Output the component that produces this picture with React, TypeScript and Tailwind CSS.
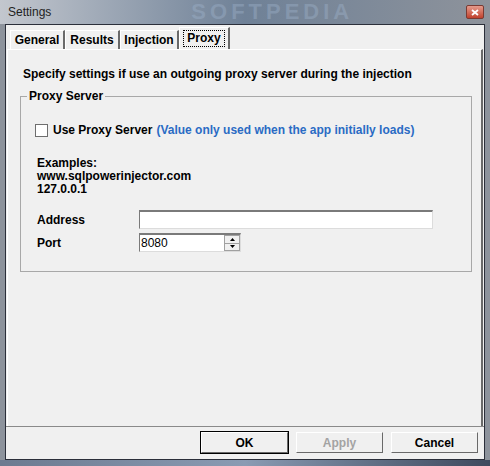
import React from 'react';

const font = { fontFamily: '"Liberation Sans", Arial, sans-serif' };

function Tab({ label, selected, width }: { label: string; selected?: boolean; width: string }) {
  if (selected) {
    return (
      <div
        className={`${width} h-[22px] -mb-px -ml-[2px] z-10 flex items-start justify-center pt-[2px] bg-[#f0f0f0] border-l border-t border-white border-r-2 border-r-[#6a6a6a] relative`}
      >
        <span className="px-[3px] leading-[15px] border border-dotted border-black text-[12px] font-bold text-black">
          {label}
        </span>
      </div>
    );
  }
  return (
    <div
      className={`${width} h-[19px] mt-[3px] flex items-center justify-center bg-[#f0f0f0] border-l border-t border-white border-r-2 border-r-[#6a6a6a] text-[12px] font-bold text-black`}
    >
      {label}
    </div>
  );
}

function Button({ label, primary, disabled }: { label: string; primary?: boolean; disabled?: boolean }) {
  return (
    <div
      className={`w-[89px] h-[23px] flex items-center justify-center text-[12px] font-bold ${
        primary ? 'border border-black' : 'border border-transparent'
      }`}
    >
      <div
        className={`w-full h-full flex items-center justify-center bg-[#f0f0f0] border-l border-t border-white border-r border-b border-r-[#696969] border-b-[#696969] ${
          disabled ? 'text-[#a3a3a3]' : 'text-black'
        }`}
      >
        {label}
      </div>
    </div>
  );
}

export default function App() {
  return (
    <div className="w-[490px] h-[466px] flex flex-col bg-[#8d939c] overflow-hidden" style={font}>
      {/* Title bar */}
      <div className="h-[24px] flex items-center pl-[8px] pr-[6px] bg-gradient-to-r from-[#c3c7ce] via-[#6f8197] to-[#8e939b]">
        <span className="text-[12px] text-[#1e1e1e]">Settings</span>
        <span className="ml-[140px] text-[22px] font-bold tracking-[4px] text-[#9fb3cc] opacity-40 leading-[24px]">
          SOFTPEDIA
        </span>
        <div className="ml-auto w-[18px] h-[14px] flex items-center justify-center rounded-[2px] bg-gradient-to-b from-[#e49a8c] to-[#c0402c] border border-[#7a3b33]">
          <svg width="8" height="7" viewBox="0 0 8 7">
            <path d="M1 1 L7 6 M7 1 L1 6" stroke="white" strokeWidth="1.8" />
          </svg>
        </div>
      </div>

      {/* Client area */}
      <div className="flex-1 flex px-[5px]">
        <div className="flex-1 flex flex-col bg-[#f0f0f0] border border-[#2b2f3a]">
          {/* Tabs */}
          <div className="flex pl-[4px] pt-[2px] h-[24px] items-start">
            <Tab label="General" width="w-[55px]" />
            <Tab label="Results" width="w-[55px]" />
            <Tab label="Injection" width="w-[59px]" />
            <div className="ml-[2px]">
              <Tab label="Proxy" width="w-[51px]" selected />
            </div>
          </div>

          {/* Panel */}
          <div className="ml-[1px] mr-[1px] h-[377px] border-t border-l border-white border-r-2 border-r-[#6a6a6a] flex flex-col">
            <div className="pl-[15px] pt-[17px] text-[12px] font-bold text-black leading-[14px]">
              Specify settings if use an outgoing proxy server during the injection
            </div>

            {/* Group box */}
            <div className="ml-[12px] mr-[9px] mt-[15px] h-[176px] border border-[#a8a8a8] relative flex flex-col">
              <span className="absolute -top-[8px] left-[6px] px-[2px] bg-[#f0f0f0] text-[12px] font-bold text-black leading-[14px]">
                Proxy Server
              </span>
              <div className="flex items-center pl-[14px] pt-[26px]">
                <div className="w-[13px] h-[13px] bg-white border border-[#6e6e6e]" />
                <span className="ml-[5px] text-[12px] font-bold text-black leading-[14px]">Use Proxy Server</span>
                <span className="ml-[4px] text-[12px] font-bold text-[#2a6bc4] leading-[14px]">
                  (Value only used when the app initially loads)
                </span>
              </div>

              <div className="pl-[16px] pt-[20px] text-[12px] font-bold text-black leading-[13px]">
                <div>Examples:</div>
                <div>www.sqlpowerinjector.com</div>
                <div>127.0.0.1</div>
              </div>

              <div className="flex items-center pl-[16px] pt-[14px]">
                <span className="w-[102px] text-[12px] font-bold text-black">Address</span>
                <div className="w-[294px] h-[19px] bg-white border-t-2 border-l border-[#7a7a7a] border-r border-b border-r-[#dcdcdc] border-b-[#dcdcdc]" />
              </div>
              <div className="flex items-center pl-[16px] pt-[4px]">
                <span className="w-[102px] text-[12px] font-bold text-black">Port</span>
                <div className="w-[102px] h-[19px] flex bg-white border-t-2 border-l border-[#7a7a7a] border-r border-b border-r-[#dcdcdc] border-b-[#dcdcdc]">
                  <span className="flex-1 pl-[1px] text-[12px] leading-[16px] text-black">8080</span>
                  <div className="w-[16px] flex flex-col">
                    <div className="flex-1 flex items-center justify-center bg-[#f0f0f0] border border-[#a0a0a0]">
                      <svg width="5" height="3" viewBox="0 0 5 3">
                        <path d="M2.5 0 L5 3 L0 3 Z" fill="#000" />
                      </svg>
                    </div>
                    <div className="flex-1 flex items-center justify-center bg-[#f0f0f0] border border-t-0 border-[#a0a0a0]">
                      <svg width="5" height="3" viewBox="0 0 5 3">
                        <path d="M0 0 L5 0 L2.5 3 Z" fill="#000" />
                      </svg>
                    </div>
                  </div>
                </div>
              </div>
            </div>
          </div>

          {/* Separator and buttons */}
          <div className="border-t border-[#8a8a8a] flex justify-end items-start gap-[6px] pt-[4px] pr-[5px]">
            <Button label="OK" primary />
            <Button label="Apply" disabled />
            <Button label="Cancel" />
          </div>
        </div>
      </div>

      {/* Bottom frame */}
      <div className="h-[6px] bg-gradient-to-r from-[#6c7a90] via-[#8a9bb3] to-[#3e4a5e]" />
    </div>
  );
}
